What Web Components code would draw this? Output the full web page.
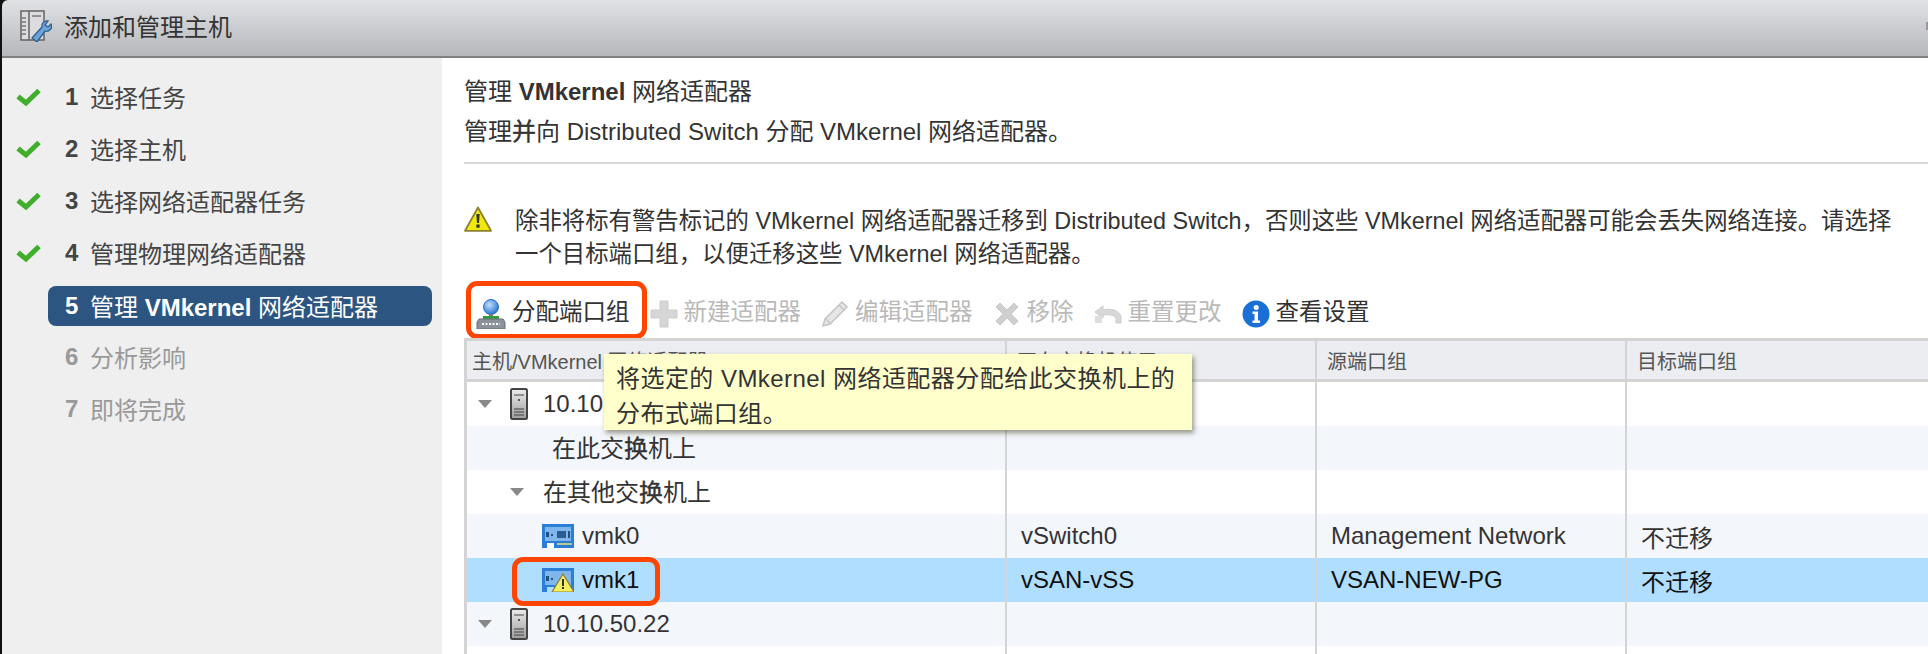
<!DOCTYPE html>
<html lang="zh">
<head>
<meta charset="utf-8">
<title>添加和管理主机</title>
<style>
  html, body { margin: 0; height: 100%; overflow: hidden; background: #fff; }
  body { font-family: "Liberation Sans", "Noto Sans CJK SC", sans-serif; color: #333; }
  .m { -webkit-text-stroke: .4px currentColor; }
</style>
</head>
<body>
<wizard-dialog>
  <wizard-header slot="header">添加和管理主机</wizard-header>
  <wizard-step slot="steps" num="1" state="done">选择任务</wizard-step>
  <wizard-step slot="steps" num="2" state="done">选择主机</wizard-step>
  <wizard-step slot="steps" num="3" state="done">选择网络适配器任务</wizard-step>
  <wizard-step slot="steps" num="4" state="done">管理物理网络适配器</wizard-step>
  <wizard-step slot="steps" num="5" state="active">管理 <b>VMkernel</b> 网络适配器</wizard-step>
  <wizard-step slot="steps" num="6" state="off">分析影响</wizard-step>
  <wizard-step slot="steps" num="7" state="off">即将完成</wizard-step>

  <page-intro>
    <span slot="title">管理 <b>VMkernel</b> 网络适配器</span>
    管理<span class="m">并</span>向 Distributed Switch 分配 VMkernel 网络适配器。
  </page-intro>

  <warn-note>除非将标有警告标记的 VMkernel 网络适配器迁移到 Distributed Switch，否则这些 VMkernel 网络适配器可能会丢失网络连接。请选择<br>一个目标端口组，以便迁移这些 VMkernel 网络适配器。</warn-note>

  <adapter-toolbar>
    <red-mark variant="tool"><tool-button icon="portgroup">分配端口组</tool-button></red-mark>
    <tool-button icon="plus" disabled>新建适配器</tool-button>
    <tool-button icon="pencil" disabled>编辑适配器</tool-button>
    <tool-button icon="cross" disabled>移除</tool-button>
    <tool-button icon="undo" disabled>重置更改</tool-button>
    <tool-button icon="info">查看设置</tool-button>
  </adapter-toolbar>

  <adapter-grid>
    <hover-tip slot="tip">将选定的 VMkernel 网络适配器分配给此交换机上的<br>分布式端口组。</hover-tip>
    <grid-row head>
      <span>主机/VMkernel 网络适配器</span><span>正在交换机使用</span><span>源端口组</span><span>目标端口组</span>
    </grid-row>
    <grid-row>
      <tree-cell depth="0" arrow icon="server">10.10.50.21</tree-cell><span></span><span></span><span></span>
    </grid-row>
    <grid-row alt>
      <tree-cell depth="1">在此交<span class="m">换</span>机上</tree-cell><span></span><span></span><span></span>
    </grid-row>
    <grid-row>
      <tree-cell depth="2" arrow>在其他交<span class="m">换</span>机上</tree-cell><span></span><span></span><span></span>
    </grid-row>
    <grid-row alt>
      <tree-cell depth="3" icon="nic">vmk0</tree-cell><span>vSwitch0</span><span>Management Network</span><span>不迁移</span>
    </grid-row>
    <grid-row selected>
      <tree-cell depth="3" icon="nicwarn" marked>vmk1</tree-cell><span>vSAN-vSS</span><span>VSAN-NEW-PG</span><span>不迁移</span>
    </grid-row>
    <grid-row alt>
      <tree-cell depth="0" arrow icon="server">10.10.50.22</tree-cell><span></span><span></span><span></span>
    </grid-row>
    <grid-row>
      <span></span><span></span><span></span><span></span>
    </grid-row>
  </adapter-grid>
</wizard-dialog>

<script>
const ICONS = {
  check: `<svg width="25" height="19" viewBox="0 0 25 19"><path d="M2 8.500l8 6.500L23 2.500" fill="none" stroke="#3fae2a" stroke-width="5"/></svg>`,
  wizard: `<svg width="32" height="32" viewBox="0 0 32 32">
    <path d="M1 1h23v29H1z" fill="#dcdcde" stroke="#636366" stroke-width="1.500"/>
    <path d="M9 1v29" stroke="#636366" stroke-width="1.500"/>
    <path d="M2 8h4M2 12h4M2 16h4M2 20h4M2 24h4M12 6h9" stroke="#77777a" stroke-width="1.500"/>
    <path d="M12 28l10-11a5 5 0 0 1 6-6l-3 4 3 2 3-3a5 5 0 0 1-6 7L17 32z" fill="#6fa3d6" stroke="#2e5f93" stroke-width="1.300"/>
  </svg>`,
  warn: `<svg width="28" height="26" viewBox="0 0 28 26">
    <path d="M14 1.500L27 24.800H1z" fill="#f1e90c" stroke="#8d8030" stroke-width="1.800" stroke-linejoin="round"/>
    <path d="M12.300 8h3.400l-.7 9h-2z" fill="#333"/><rect x="12.400" y="18.500" width="3.200" height="3.200" fill="#333"/>
  </svg>`,
  portgroup: `<svg width="30" height="30" viewBox="0 0 30 30">
    <defs><radialGradient id="g" cx=".4" cy=".35" r=".7"><stop offset="0" stop-color="#bfe0fb"/><stop offset="1" stop-color="#1f6fd0"/></radialGradient></defs>
    <circle cx="15" cy="8" r="7.500" fill="url(#g)" stroke="#2a6cc0"/>
    <rect x="13" y="15" width="4" height="3" fill="#777"/>
    <rect x="7" y="17" width="16" height="3" fill="#2f9e3a"/>
    <path d="M3 20h24l2 3v7H1v-7z" fill="#8b929a" stroke="#6a7077"/>
    <path d="M6 25h18" stroke="#fff" stroke-width="2" stroke-dasharray="2 1.500"/>
  </svg>`,
  plus: `<svg width="28" height="28" viewBox="0 0 28 28"><path d="M10 1h8v9h9v8h-9v9h-8v-9H1v-8h9z" fill="#d6d6d6" stroke="#cdcdcd"/></svg>`,
  pencil: `<svg width="28" height="28" viewBox="0 0 28 28"><path d="M2 26l2-7L21 2l5 5L9 24z" fill="#e6e6e6" stroke="#c4c4c4" stroke-width="1.500"/><path d="M5 19l4 4M18 5l5 5" stroke="#c4c4c4" stroke-width="1.500"/></svg>`,
  cross: `<svg width="28" height="28" viewBox="0 0 28 28"><path d="M3 7l4-4 7 7 7-7 4 4-7 7 7 7-4 4-7-7-7 7-4-4 7-7z" fill="#cfcfcf" stroke="#c6c6c6"/></svg>`,
  undo: `<svg width="28" height="28" viewBox="0 0 28 28"><path d="M1 12L9 6v4c8-2 15 0 18 6v7h-5v-5c-2-3-7-4-13-3v3z" fill="#d8d8d8" stroke="#cccccc"/><rect x="1" y="16" width="7" height="7" fill="#dedede"/></svg>`,
  info: `<svg width="28" height="28" viewBox="0 0 28 28">
    <circle cx="14" cy="14" r="13.500" fill="#1a6fd4"/>
    <circle cx="14.200" cy="7.600" r="2.500" fill="#fff"/>
    <path d="M10.500 11.500h5.500v9h2v2.500h-7.500v-2.500h2v-6.500h-2z" fill="#fff"/>
  </svg>`,
  server: `<svg width="18" height="32" viewBox="0 0 18 32">
    <defs><linearGradient id="s" x1="0" x2="0" y1="0" y2="1"><stop offset="0" stop-color="#ececec"/><stop offset="1" stop-color="#9d9d9d"/></linearGradient></defs>
    <rect x="1" y="1" width="16" height="30" rx="1.500" fill="url(#s)" stroke="#444" stroke-width="2"/>
    <path d="M4 7h10" stroke="#777" stroke-width="1.500"/><rect x="8" y="11" width="2" height="2" fill="#555"/>
    <path d="M4 21h10M4 24h10M4 27h10" stroke="#666" stroke-width="1.500"/>
  </svg>`,
  nic: `<svg width="32" height="24" viewBox="0 0 32 24">
    <path d="M0 0h32v24H0z" fill="#2a7ed6"/>
    <rect x="3" y="3" width="26" height="14" fill="#7fb6ec"/>
    <rect x="4" y="8" width="3" height="5" fill="#23507f"/><rect x="9" y="10" width="2" height="2" fill="#23507f"/>
    <rect x="15" y="7" width="9" height="7" fill="#2a5d92"/><rect x="26" y="7" width="2" height="7" fill="#23507f"/>
    <path d="M5 24v-5h7v5z" fill="#fff"/><rect x="15" y="19" width="15" height="2" fill="#b6c98f"/>
  </svg>`
}
ICONS.nicwarn = `<svg width="32" height="24" viewBox="0 0 32 24">
    <path d="M0 0h32v24H0z" fill="#2a7ed6"/>
    <rect x="3" y="3" width="26" height="14" fill="#7fb6ec"/>
    <rect x="4" y="8" width="3" height="5" fill="#23507f"/><rect x="9" y="10" width="2" height="2" fill="#23507f"/>
    <path d="M5 24v-5h7v5z" fill="#b0deff"/>
    <path d="M21 6l11 18H10z" fill="#f4ee62" stroke="#8d8030" stroke-width="1.200"/>
    <rect x="20" y="11" width="2" height="7" fill="#333"/><rect x="20" y="19" width="2" height="2" fill="#333"/>
  </svg>`

class WizardDialog extends HTMLElement {
  constructor(){
    super()
    this.attachShadow({mode: 'open'}).innerHTML = `
      <style>
        :host{ display: flex; flex-direction: column; height: 654px; width: 1928px; border-left: 2px solid #111; box-sizing: border-box; background: #111; }
        .body{ display: flex; flex: 1; min-height: 0; background: #fff; }
        .steps{ width: 440px; flex: none; background: #efefef; padding-top: 13px; box-sizing: border-box; display: flex; flex-direction: column; }
        .main{ flex: 1; min-width: 0; padding: 15px 0 0 22px; overflow: hidden; }
      </style>
      <slot name="header"></slot>
      <div class="body">
        <div class="steps"><slot name="steps"></slot></div>
        <div class="main"><slot></slot></div>
      </div>`
  }
}

class WizardHeader extends HTMLElement {
  constructor(){
    super()
    this.attachShadow({mode: 'open'}).innerHTML = `
      <style>
        :host{ display: flex; align-items: center; gap: 12px; height: 58px; box-sizing: border-box; padding: 0 0 5px 18px;
          background: linear-gradient(#e1e2e6, #b6b7ba); border-bottom: 2px solid #808080; border-top-left-radius: 6px; font-size: 24px; color: #333; position: relative; }
        .grip{ position: absolute; right: 0; top: 22px; width: 2px; height: 8px; background: #999; }
      </style>
      ${ICONS.wizard}<span><slot></slot></span><i class="grip"></i>`
  }
}

class WizardStep extends HTMLElement {
  constructor(){
    super()
    const state = this.getAttribute('state')
    this.attachShadow({mode: 'open'}).innerHTML = `
      <style>
        :host{ display: block; height: 52px; position: relative; font-size: 24px; color: #444; }
        .row{ display: flex; align-items: center; height: 40px; margin: 6px 10px 6px 0; padding-left: 63px; border-radius: 8px; }
        .check{ position: absolute; left: 14px; top: 17px; line-height: 0; }
        .num{ font-weight: bold; width: 25px; flex: none; }
        .label{ margin-bottom: 2px; }
        :host([state=active]) .row{ background: #2c5681; color: #fff; margin: 7px 10px 5px 46px; padding-left: 17px; }
        :host([state=off]){ color: #999; }
      </style>
      ${state === 'done' ? `<span class="check">${ICONS.check}</span>` : ''}
      <div class="row"><span class="num">${this.getAttribute('num')}</span><span class="label"><slot></slot></span></div>`
  }
}

class PageIntro extends HTMLElement {
  constructor(){
    super()
    this.attachShadow({mode: 'open'}).innerHTML = `
      <style>
        :host{ display: block; box-sizing: border-box; padding-top: 1px; font-size: 24px; color: #333; border-bottom: 2px solid #d8d8d8; height: 91px; white-space: nowrap; }
        .t{ line-height: 36px; margin-bottom: 4px; }
        .d{ line-height: 36px; }
      </style>
      <div class="t"><slot name="title"></slot></div>
      <div class="d"><slot></slot></div>`
  }
}

class WarnNote extends HTMLElement {
  constructor(){
    super()
    this.attachShadow({mode: 'open'}).innerHTML = `
      <style>
        :host{ display: flex; gap: 23px; margin-top: 41px; height: 66px; font-size: 23.400px; line-height: 33px; color: #333; white-space: nowrap; }
        .i{ line-height: 0; padding-top: 1px; flex: none; }
      </style>
      <div class="i">${ICONS.warn}</div><div><slot></slot></div>`
  }
}

class AdapterToolbar extends HTMLElement {
  constructor(){
    super()
    this.attachShadow({mode: 'open'}).innerHTML = `
      <style>
        :host{ display: flex; align-items: center; height: 36px; margin: 23px 0 8px 12px; gap: 20px; }
      </style>
      <slot></slot>`
  }
}

class ToolButton extends HTMLElement {
  constructor(){
    super()
    this.attachShadow({mode: 'open'}).innerHTML = `
      <style>
        :host{ display: inline-flex; align-items: center; gap: 6px; font-size: 23.500px; color: #333; white-space: nowrap; }
        :host([disabled]){ color: #b9b9b9; }
        .i{ line-height: 0; margin-top: 4px; }
        .t{ margin-bottom: 4px; }
      </style>
      <span class="i">${ICONS[this.getAttribute('icon')]}</span><span class="t"><slot></slot></span>`
  }
}

// the red rectangles drawn over the screenshot
class RedMark extends HTMLElement {
  constructor(){
    super()
    this.attachShadow({mode: 'open'}).innerHTML = `
      <style>
        :host{ display: inline-flex; position: relative; }
        .box{ position: absolute; inset: -12px -17px -8px -10px; border: 5px solid #ff4500; border-radius: 11px; pointer-events: none; }
        :host([variant=row]) .box{ inset: -9px -21px -12px -30px; }
      </style>
      <slot></slot><i class="box"></i>`
  }
}

class AdapterGrid extends HTMLElement {
  constructor(){
    super()
    this.attachShadow({mode: 'open'}).innerHTML = `
      <style>
        :host{ display: block; position: relative; border-left: 3px solid #d4d4d4; }
      </style>
      <slot></slot><slot name="tip"></slot>`
  }
}

class GridRow extends HTMLElement {
  constructor(){
    super()
    this.attachShadow({mode: 'open'}).innerHTML = `
      <style>
        :host{ display: grid; grid-template-columns: 538px 310px 310px 1fr; height: 44px; font-size: 24px; color: #333; background: #fff; }
        :host([alt]){ background: #f3f6fb; }
        :host([selected]){ background: #b0deff; color: #111; }
        :host([head]){ background: #ebedf0; font-size: 20px; color: #555; border-top: 3px solid #d4d4d4; border-bottom: 3px solid #d4d4d4; box-sizing: border-box; }
        ::slotted(*){ display: flex; align-items: center; padding-left: 14px; border-left: 2px solid #d4d4d4; white-space: nowrap; overflow: hidden; box-sizing: border-box; }
        ::slotted(tree-cell){ border-left: 0; padding-left: 0; overflow: visible; }
        :host([head]) ::slotted(*){ padding-left: 10px; }
        :host([head]) ::slotted(:first-child){ border-left: 0; padding-left: 5px; }
        :host(:last-child) ::slotted(:first-child){ border-left: 0; }
      </style>
      <slot></slot>`
  }
}

class TreeCell extends HTMLElement {
  constructor(){
    super()
    const depth = +this.getAttribute('depth')
    const pad = [11, 85, 43, 75][depth]
    const icon = this.getAttribute('icon')
    const arrow = this.hasAttribute('arrow') ? '<i class="arrow"></i>' : ''
    const lift = depth === 1 || depth === 2 ? 3 : 0
    const group = `<span class="g">${icon ? `<span class="ic">${ICONS[icon]}</span>` : ''}<span style="margin-bottom:${lift}px"><slot></slot></span></span>`
    this.attachShadow({mode: 'open'}).innerHTML = `
      <style>
        :host{ display: flex; align-items: center; padding-left: ${pad}px !important; }
        .arrow{ width: 0; height: 0; border: 7px solid transparent; border-top: 8px solid #888; border-bottom: 0; margin-right: ${depth === 0 ? 18 : 19}px; flex: none; }
        .g{ display: inline-flex; align-items: center; gap: ${depth === 0 ? 15 : 8}px; }
        .ic{ line-height: 0; }
      </style>
      ${arrow}${this.hasAttribute('marked') ? `<red-mark variant="row">${group}</red-mark>` : group}`
  }
}

class HoverTip extends HTMLElement {
  constructor(){
    super()
    this.attachShadow({mode: 'open'}).innerHTML = `
      <style>
        :host{ position: absolute; left: 137px; top: 16px; width: 588px; height: 76px; box-sizing: border-box; padding: 7px 0 0 12px;
          background: #ffffcb; box-shadow: 2px 3px 5px rgba(70,70,40,.55); font-size: 24px; line-height: 35px; letter-spacing: .45px; color: #333; white-space: nowrap; z-index: 2; }
      </style>
      <slot></slot>`
  }
}

customElements.define('wizard-dialog', WizardDialog)
customElements.define('wizard-header', WizardHeader)
customElements.define('wizard-step', WizardStep)
customElements.define('page-intro', PageIntro)
customElements.define('warn-note', WarnNote)
customElements.define('adapter-toolbar', AdapterToolbar)
customElements.define('tool-button', ToolButton)
customElements.define('red-mark', RedMark)
customElements.define('adapter-grid', AdapterGrid)
customElements.define('grid-row', GridRow)
customElements.define('tree-cell', TreeCell)
customElements.define('hover-tip', HoverTip)
</script>
</body>
</html>
